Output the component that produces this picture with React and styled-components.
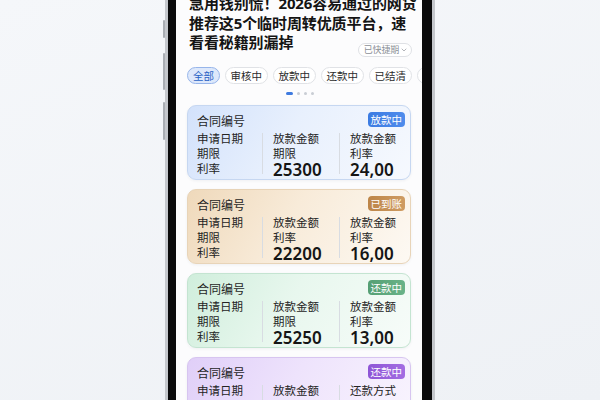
import React from 'react';
import styled, { createGlobalStyle } from 'styled-components';
import { ChevronDown } from 'lucide-react';

const GlobalStyle = createGlobalStyle`
  html, body {
    margin: 0;
    padding: 0;
  }
  body {
    background: linear-gradient(160deg, #f5f7fa 0%, #eef1f5 100%);
    font-family: "Noto Sans", "Noto Sans CJK SC", sans-serif;
    color: #1d1d1f;
  }
`;

const tones = {
  blue: {
    bg: 'linear-gradient(120deg, #d3e2fb 0%, #e8f0fd 45%, #f6f9fe 100%)',
    border: '#c6d7f1',
    badge: 'linear-gradient(90deg, #3b7be2, #4f8cec)',
  },
  gold: {
    bg: 'linear-gradient(120deg, #efd9bb 0%, #f8ebd9 45%, #fdf9f3 100%)',
    border: '#e8d4b8',
    badge: 'linear-gradient(90deg, #bd8548, #cf9c63)',
  },
  green: {
    bg: 'linear-gradient(120deg, #d0eedc 0%, #e8f7ee 45%, #f7fcf9 100%)',
    border: '#c4e4d1',
    badge: 'linear-gradient(90deg, #559f74, #69b388)',
  },
  purple: {
    bg: 'linear-gradient(120deg, #e0cff8 0%, #eee3fc 45%, #f9f5fe 100%)',
    border: '#d7c5f0',
    badge: 'linear-gradient(90deg, #8e55d6, #a36ce2)',
  },
};

const Stage = styled.div`
  width: 600px;
  height: 400px;
  overflow: hidden;
  display: flex;
  justify-content: center;
`;

const Phone = styled.div`
  position: relative;
  width: 270px;
  height: 400px;
  box-sizing: border-box;
  border-left: 3px solid #c4c7cc;
  border-right: 3px solid #c4c7cc;
  padding: 0 10px 0 8px;
  background: #0a0a0b;
`;

const SideButton = styled.span`
  position: absolute;
  left: -5px;
  top: ${(p) => p.top}px;
  width: 2px;
  height: ${(p) => p.h}px;
  border-radius: 1px;
  background: #a9adb3;
`;

const Screen = styled.div`
  height: 100%;
  overflow: hidden;
  background: #fcfcfd;
  padding: 0 11px 0 12px;
`;

const Title = styled.h1`
  margin: -6px 0 0;
  padding-left: 1px;
  font-family: "Noto Sans", "Noto Sans CJK SC", sans-serif;
  font-size: 15px;
  line-height: 19.5px;
  font-weight: 700;
  color: #141414;
  letter-spacing: -0.1px;
`;

const TitleLine = styled.span`
  display: block;
  white-space: nowrap;
`;

const LastLine = styled.div`
  display: flex;
  justify-content: space-between;
  align-items: flex-start;
`;

const FilterPill = styled.span`
  margin-top: 10px;
  margin-right: -1px;
  height: 14px;
  box-sizing: border-box;
  display: inline-flex;
  align-items: center;
  gap: 1px;
  padding: 0 3px 0 5px;
  border: 1px solid #dfe1e5;
  border-radius: 8px;
  font-size: 9px;
  font-weight: 400;
  letter-spacing: -0.2px;
  color: #8c9097;
  background: #fff;
`;

const Tabs = styled.div`
  display: flex;
  gap: 4.5px;
  margin: 10px -11px 0 -1px;
  overflow: hidden;
`;

const Tab = styled.span`
  flex-shrink: 0;
  height: 17px;
  box-sizing: border-box;
  display: inline-flex;
  align-items: center;
  padding: 0 5px;
  border-radius: 9px;
  font-size: 10.5px;
  border: 1px solid ${(p) => (p.active ? '#97b5ea' : '#e0e2e6')};
  background: ${(p) => (p.active ? '#dde8fb' : '#fff')};
  color: ${(p) => (p.active ? '#2a62c4' : '#2b2b2b')};
`;

const Dots = styled.div`
  display: flex;
  justify-content: center;
  align-items: center;
  gap: 4px;
  margin-top: 8px;
  height: 3px;
`;

const Dot = styled.span`
  width: ${(p) => (p.active ? 7 : 3)}px;
  height: 3px;
  border-radius: 2px;
  background: ${(p) => (p.active ? '#3f7be0' : '#c9cdd4')};
`;

const CardList = styled.div`
  display: flex;
  flex-direction: column;
  gap: 9px;
  margin: 9.5px 0 0 -1px;
`;

const Card = styled.div`
  height: 75px;
  flex-shrink: 0;
  box-sizing: border-box;
  padding: 6px 5px 3px 9px;
  border-radius: 9px;
  border: 1px solid ${(p) => tones[p.tone].border};
  background: ${(p) => tones[p.tone].bg};
  box-shadow: 0 1px 3px rgba(40, 50, 70, 0.06);
`;

const CardHead = styled.div`
  display: flex;
  justify-content: space-between;
  align-items: center;
  height: 15px;
`;

const CardTitle = styled.span`
  font-size: 12px;
  color: #1f1f1f;
  margin-top: 3px;
`;

const Badge = styled.span`
  height: 15px;
  display: inline-flex;
  align-items: center;
  padding: 0 3px;
  border-radius: 4px;
  font-size: 10.5px;
  color: #fff;
  background: ${(p) => tones[p.tone].badge};
`;

const Grid = styled.div`
  display: grid;
  grid-template-columns: 55px 1px 56px 1px 1fr;
  column-gap: 10px;
  margin-top: 4px;
`;

const Col = styled.div`
  display: flex;
  flex-direction: column;
  font-size: 11.5px;
  line-height: 15px;
  color: #242424;
  white-space: nowrap;
`;

const Divider = styled.span`
  background: #d8dce2;
  margin: 2px 0 4px;
`;

const Amount = styled.span`
  font-family: "Noto Sans", sans-serif;
  font-size: 17px;
  font-weight: 600;
  line-height: 17px;
  color: #151515;
`;

const cards = [
  { tone: 'blue', status: '放款中', mid: ['放款金额', '期限', '25300'], right: ['放款金额', '利率', '24,00'] },
  { tone: 'gold', status: '已到账', mid: ['放款金额', '利率', '22200'], right: ['放款金额', '利率', '16,00'] },
  { tone: 'green', status: '还款中', mid: ['放款金额', '期限', '25250'], right: ['放款金额', '利率', '13,00'] },
  { tone: 'purple', status: '还款中', mid: ['放款金额', '期限', '25800'], right: ['还款方式', '利率', '12,00'] },
];

const tabs = ['全部', '审核中', '放款中', '还款中', '已结清', '已逾期'];

function ValueCol({ items }) {
  return (
    <Col>
      <span>{items[0]}</span>
      <span>{items[1]}</span>
      <Amount>{items[2]}</Amount>
    </Col>
  );
}

export default function App() {
  return (
    <>
      <GlobalStyle />
      <Stage>
        <Phone>
          <SideButton top={20} h={18} />
          <SideButton top={53} h={37} />
          <SideButton top={102} h={38} />
          <Screen>
            <Title>
              <TitleLine>急用钱别慌！2026容易通过的网贷</TitleLine>
              <TitleLine>推荐这5个临时周转优质平台，速</TitleLine>
              <LastLine>
                <TitleLine>看看秘籍别漏掉</TitleLine>
                <FilterPill>
                  已快捷期
                  <ChevronDown size={8} strokeWidth={2} />
                </FilterPill>
              </LastLine>
            </Title>

            <Tabs>
              {tabs.map((t, i) => (
                <Tab key={t} active={i === 0}>{t}</Tab>
              ))}
            </Tabs>

            <Dots>
              <Dot active />
              <Dot />
              <Dot />
              <Dot />
            </Dots>

            <CardList>
              {cards.map((c, i) => (
                <Card key={i} tone={c.tone}>
                  <CardHead>
                    <CardTitle>合同编号</CardTitle>
                    <Badge tone={c.tone}>{c.status}</Badge>
                  </CardHead>
                  <Grid>
                    <Col>
                      <span>申请日期</span>
                      <span>期限</span>
                      <span>利率</span>
                    </Col>
                    <Divider />
                    <ValueCol items={c.mid} />
                    <Divider />
                    <ValueCol items={c.right} />
                  </Grid>
                </Card>
              ))}
            </CardList>
          </Screen>
        </Phone>
      </Stage>
    </>
  );
}
